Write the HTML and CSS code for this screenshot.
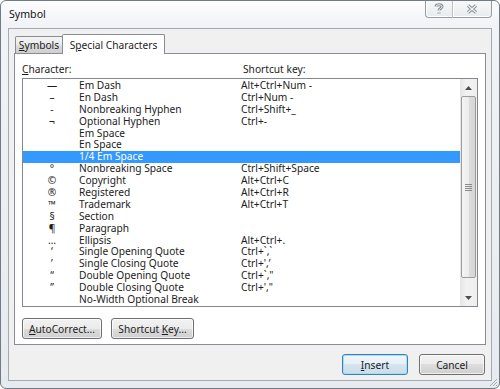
FILE: index.html
```html
<!DOCTYPE html>
<html>
<head>
<meta charset="utf-8">
<link rel="stylesheet" href="styles.css">
</head>
<body>
<div class="window">
  <div class="titlebar">
    <span class="title">Symbol</span>
    <div class="caption">
      <div class="cbtn help">
        <svg width="10" height="12" viewBox="0 0 10 12"><path d="M2 3.5 C2 1.2 8 1.2 8 3.6 C8 5.4 5 5.6 5 7.6 M5 9.6 L5 10.6" fill="none" stroke="#8a9097" stroke-width="3"/><path d="M2 3.5 C2 1.2 8 1.2 8 3.6 C8 5.4 5 5.6 5 7.6 M5 9.6 L5 10.6" fill="none" stroke="#f4f5f6" stroke-width="1"/></svg>
      </div>
      <div class="cbtn close">
        <svg width="12" height="10" viewBox="0 0 12 10"><path d="M2 1.5 L10 8.5 M10 1.5 L2 8.5" stroke="#8a9097" stroke-width="3.2" fill="none"/><path d="M2 1.5 L10 8.5 M10 1.5 L2 8.5" stroke="#f2f3f4" stroke-width="1.2" fill="none"/></svg>
      </div>
    </div>
  </div>
  <div class="client">
    <div class="tabs">
      <div class="tab"><u>S</u>ymbols</div>
      <div class="tab active">S<u>p</u>ecial Characters</div>
    </div>
    <div class="panel">
      <div class="headers">
        <span class="h-char"><u>C</u>haracter:</span>
        <span class="h-key">Shortcut key:</span>
      </div>
      <div class="listbox">
        <div class="rows">
          <div class="row"><span class="sym">—</span><span class="name">Em Dash</span><span class="key">Alt+Ctrl+Num -</span></div>
          <div class="row"><span class="sym">–</span><span class="name">En Dash</span><span class="key">Ctrl+Num -</span></div>
          <div class="row"><span class="sym">-</span><span class="name">Nonbreaking Hyphen</span><span class="key">Ctrl+Shift+_</span></div>
          <div class="row"><span class="sym">¬</span><span class="name">Optional Hyphen</span><span class="key">Ctrl+-</span></div>
          <div class="row"><span class="sym"></span><span class="name">Em Space</span><span class="key"></span></div>
          <div class="row"><span class="sym"></span><span class="name">En Space</span><span class="key"></span></div>
          <div class="row sel"><span class="sym"></span><span class="name">1/4 Em Space</span><span class="key"></span></div>
          <div class="row"><span class="sym">°</span><span class="name">Nonbreaking Space</span><span class="key">Ctrl+Shift+Space</span></div>
          <div class="row"><span class="sym">©</span><span class="name">Copyright</span><span class="key">Alt+Ctrl+C</span></div>
          <div class="row"><span class="sym">®</span><span class="name">Registered</span><span class="key">Alt+Ctrl+R</span></div>
          <div class="row"><span class="sym">™</span><span class="name">Trademark</span><span class="key">Alt+Ctrl+T</span></div>
          <div class="row"><span class="sym">§</span><span class="name">Section</span><span class="key"></span></div>
          <div class="row"><span class="sym">¶</span><span class="name">Paragraph</span><span class="key"></span></div>
          <div class="row"><span class="sym">…</span><span class="name">Ellipsis</span><span class="key">Alt+Ctrl+.</span></div>
          <div class="row"><span class="sym">‘</span><span class="name">Single Opening Quote</span><span class="key">Ctrl+`,`</span></div>
          <div class="row"><span class="sym">’</span><span class="name">Single Closing Quote</span><span class="key">Ctrl+',’</span></div>
          <div class="row"><span class="sym">“</span><span class="name">Double Opening Quote</span><span class="key">Ctrl+`,"</span></div>
          <div class="row"><span class="sym">”</span><span class="name">Double Closing Quote</span><span class="key">Ctrl+',"</span></div>
          <div class="row"><span class="sym"></span><span class="name">No-Width Optional Break</span><span class="key"></span></div>
        </div>
        <div class="scrollbar">
          <div class="arrow"><svg width="7" height="4" viewBox="0 0 7 4"><path d="M0 4 L3.5 0 L7 4 Z" fill="#4d4d4d"/></svg></div>
          <div class="thumb"><span class="grip"></span></div>
          <div class="track"></div>
          <div class="arrow"><svg width="7" height="4" viewBox="0 0 7 4"><path d="M0 0 L3.5 4 L7 0 Z" fill="#4d4d4d"/></svg></div>
        </div>
      </div>
      <div class="panel-btns">
        <button class="btn w-auto"><u>A</u>utoCorrect...</button>
        <button class="btn w-short">Shortcut <u>K</u>ey...</button>
      </div>
    </div>
    <div class="dialog-btns">
      <button class="btn btn-default"><u>I</u>nsert</button>
      <button class="btn w-cancel">Cancel</button>
    </div>
  </div>
  <svg class="grip-corner" width="10" height="10" viewBox="0 0 10 10"><path d="M9 2 L2 9 M9 5 L5 9 M9 8 L8 9" stroke="#a7adb3" stroke-width="1" fill="none"/></svg>
</div>
</body>
</html>
```
FILE: styles.css
```css
html, body {
  margin: 0;
  padding: 0;
}
body {
  width: 500px;
  height: 389px;
  overflow: hidden;
  background: #ffffff;
  font-family: "Segoe UI", "Noto Sans", "Open Sans", sans-serif;
  font-size: 10.2px;
  color: #1c1c1c;
}
u {
  text-decoration: underline;
  text-underline-offset: 1px;
  text-decoration-thickness: 1px;
}
.window {
  position: relative;
  box-sizing: border-box;
  width: 500px;
  height: 389px;
  border: 1px solid #727b85;
  border-radius: 6px;
  background: linear-gradient(to bottom, #fdfdfe 0, #f1f3f6 24px, #e7eaee 100%);
  padding: 0 7px 7px 7px;
  display: flex;
  flex-direction: column;
}
.titlebar {
  height: 27px;
  display: flex;
  align-items: flex-start;
  flex: none;
}
.title {
  padding-left: 1px;
  line-height: 27px;
  font-size: 10.6px;
  color: #111;
}
.caption {
  margin-left: auto;
  margin-right: 0;
  display: flex;
  height: 17px;
}
.cbtn {
  box-sizing: border-box;
  height: 17px;
  border: 1px solid #959ca4;
  border-top: none;
  background: linear-gradient(to bottom, #f7f8f9, #e8ebee);
  box-shadow: inset 0 -1px 0 #ffffff, inset 1px 0 0 #ffffff;
  display: flex;
  align-items: center;
  justify-content: center;
}
.help {
  width: 27px;
  border-right: none;
  border-radius: 0 0 0 4px;
}
.close {
  width: 40px;
  border-radius: 0 0 4px 0;
  border-left: 1px solid #b9bec4;
}
.client {
  flex: 1;
  box-sizing: border-box;
  border: 1px solid #a3aab2;
  background: #f0f0f0;
  padding: 5px 6px 0 5px;
}
.tabs {
  position: relative;
  z-index: 1;
  display: flex;
  align-items: flex-end;
  height: 20px;
}
.tab {
  box-sizing: border-box;
  height: 17px;
  margin-bottom: 1px;
  margin-left: 1px;
  width: 48px;
  border: 1px solid #898c95;
  border-bottom: none;
  border-radius: 2px 2px 0 0;
  background: linear-gradient(to bottom, #f3f3f3 0, #ebebeb 50%, #dddddd 50%, #cfcfcf 100%);
  text-align: center;
  line-height: 16px;
}
.tab.active {
  height: 20px;
  margin-bottom: 0;
  margin-left: -1px;
  width: 103px;
  background: #ffffff;
  line-height: 20px;
}
.panel {
  box-sizing: border-box;
  width: 472px;
  height: 292px;
  margin-top: -1px;
  border: 1px solid #898c95;
  background: #ffffff;
  padding: 8px 6px 5px 7px;
}
.headers {
  display: flex;
  height: 16px;
  line-height: 14px;
}
.h-char {
  width: 221px;
}
.listbox {
  box-sizing: border-box;
  width: 456px;
  height: 229px;
  border: 1px solid #828790;
  display: flex;
  background: #ffffff;
}
.rows {
  flex: 1;
  padding-top: 1px;
}
.row {
  display: flex;
  height: 11.9px;
  line-height: 11.9px;
  white-space: nowrap;
}
.row.sel {
  background: #3399ff;
  color: #ffffff;
}
.sym {
  box-sizing: border-box;
  width: 56px;
  padding-left: 2px;
  text-align: center;
}
.name {
  width: 162px;
}
.scrollbar {
  width: 17px;
  display: flex;
  flex-direction: column;
  background: linear-gradient(to right, #e6e6e6 0, #f2f2f2 40%, #eeeeee 100%);
}
.arrow {
  height: 17px;
  flex: none;
  display: flex;
  align-items: center;
  justify-content: center;
}
.thumb {
  box-sizing: border-box;
  height: 182px;
  margin: 0 1px;
  border: 1px solid #9c9c9c;
  border-radius: 2px;
  background: linear-gradient(to right, #f5f5f5 0, #ececec 50%, #dcdcdc 51%, #d6d6d6 100%);
  display: flex;
  align-items: center;
  justify-content: center;
  flex: none;
}
.grip {
  width: 7px;
  height: 7px;
  background: repeating-linear-gradient(to bottom, #8a8a8a 0, #8a8a8a 1px, transparent 1px, transparent 2px);
}
.track {
  flex: 1;
}
.panel-btns {
  display: flex;
  gap: 9px;
  margin-top: 11px;
}
.btn {
  box-sizing: border-box;
  height: 21px;
  padding: 0;
  margin: 0;
  border: 1px solid #707070;
  border-radius: 3px;
  background: linear-gradient(to bottom, #f2f2f2 0, #ebebeb 50%, #dddddd 50%, #cfcfcf 100%);
  box-shadow: inset 0 0 0 1px rgba(255, 255, 255, 0.65);
  font-family: inherit;
  font-size: inherit;
  color: #1c1c1c;
  line-height: 18px;
  text-align: center;
}
.w-auto {
  width: 80px;
}
.w-short {
  width: 83px;
}
.w-cancel {
  width: 66px;
}
.btn-default {
  width: 66px;
  border-color: #3c7fb1;
  background: linear-gradient(to bottom, #eef6fb 0, #e6f0f7 50%, #d6e5ef 50%, #cadde9 100%);
  box-shadow: inset 0 0 0 1px #a9dcf6;
}
.dialog-btns {
  display: flex;
  justify-content: flex-end;
  gap: 11px;
  margin-top: 9px;
}
.grip-corner {
  position: absolute;
  right: 1px;
  bottom: 1px;
}
```
